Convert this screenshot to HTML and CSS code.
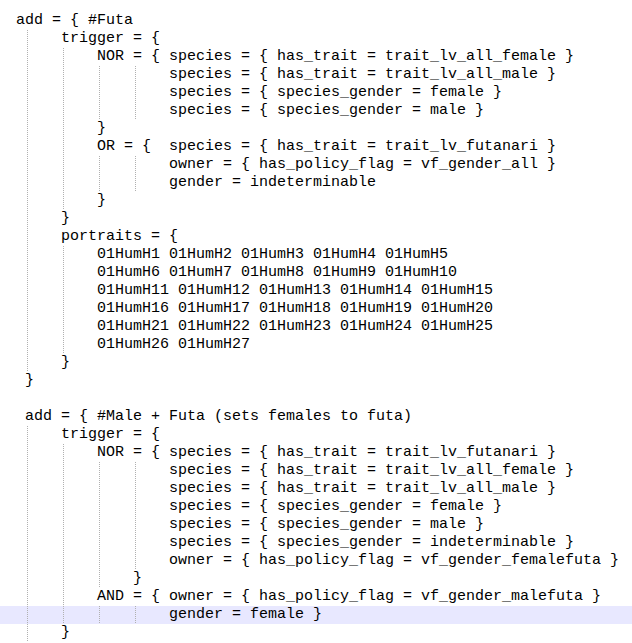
FILE: index.html
```html
<!DOCTYPE html>
<html>
<head>
<meta charset="utf-8">
<link rel="stylesheet" href="styles.css">
</head>
<body>
<div class="editor">
<div class="ln"> add = { #Futa</div>
<div class="ln">  <span class="g"></span>trigger = {</div>
<div class="ln">  <span class="g"></span><span class="g"></span>NOR = { species = { has_trait = trait_lv_all_female }</div>
<div class="ln">  <span class="g"></span><span class="g"></span><span class="g"></span><span class="g"></span>species = { has_trait = trait_lv_all_male }</div>
<div class="ln">  <span class="g"></span><span class="g"></span><span class="g"></span><span class="g"></span>species = { species_gender = female }</div>
<div class="ln">  <span class="g"></span><span class="g"></span><span class="g"></span><span class="g"></span>species = { species_gender = male }</div>
<div class="ln">  <span class="g"></span><span class="g"></span>}</div>
<div class="ln">  <span class="g"></span><span class="g"></span>OR = {  species = { has_trait = trait_lv_futanari }</div>
<div class="ln">  <span class="g"></span><span class="g"></span><span class="g"></span><span class="g"></span>owner = { has_policy_flag = vf_gender_all }</div>
<div class="ln">  <span class="g"></span><span class="g"></span><span class="g"></span><span class="g"></span>gender = indeterminable</div>
<div class="ln">  <span class="g"></span><span class="g"></span>}</div>
<div class="ln">  <span class="g"></span>}</div>
<div class="ln">  <span class="g"></span>portraits = {</div>
<div class="ln">  <span class="g"></span><span class="g"></span>01HumH1 01HumH2 01HumH3 01HumH4 01HumH5</div>
<div class="ln">  <span class="g"></span><span class="g"></span>01HumH6 01HumH7 01HumH8 01HumH9 01HumH10</div>
<div class="ln">  <span class="g"></span><span class="g"></span>01HumH11 01HumH12 01HumH13 01HumH14 01HumH15</div>
<div class="ln">  <span class="g"></span><span class="g"></span>01HumH16 01HumH17 01HumH18 01HumH19 01HumH20</div>
<div class="ln">  <span class="g"></span><span class="g"></span>01HumH21 01HumH22 01HumH23 01HumH24 01HumH25</div>
<div class="ln">  <span class="g"></span><span class="g"></span>01HumH26 01HumH27</div>
<div class="ln">  <span class="g"></span>}</div>
<div class="ln">  }</div>
<div class="ln"> </div>
<div class="ln">  add = { #Male + Futa (sets females to futa)</div>
<div class="ln">  <span class="g"></span>trigger = {</div>
<div class="ln">  <span class="g"></span><span class="g"></span>NOR = { species = { has_trait = trait_lv_futanari }</div>
<div class="ln">  <span class="g"></span><span class="g"></span><span class="g"></span><span class="g"></span>species = { has_trait = trait_lv_all_female }</div>
<div class="ln">  <span class="g"></span><span class="g"></span><span class="g"></span><span class="g"></span>species = { has_trait = trait_lv_all_male }</div>
<div class="ln">  <span class="g"></span><span class="g"></span><span class="g"></span><span class="g"></span>species = { species_gender = female }</div>
<div class="ln">  <span class="g"></span><span class="g"></span><span class="g"></span><span class="g"></span>species = { species_gender = male }</div>
<div class="ln">  <span class="g"></span><span class="g"></span><span class="g"></span><span class="g"></span>species = { species_gender = indeterminable }</div>
<div class="ln">  <span class="g"></span><span class="g"></span><span class="g"></span><span class="g"></span>owner = { has_policy_flag = vf_gender_femalefuta }</div>
<div class="ln">  <span class="g"></span><span class="g"></span><span class="g"></span>}</div>
<div class="ln">  <span class="g"></span><span class="g"></span>AND = { owner = { has_policy_flag = vf_gender_malefuta }</div>
<div class="ln current">  <span class="g"></span><span class="g"></span><span class="g"></span><span class="g"></span>gender = female }</div>
<div class="ln">  <span class="g"></span>}</div>
</div>
</body>
</html>
```
FILE: styles.css
```css
html, body {
  margin: 0;
  padding: 0;
  background: #ffffff;
}
.editor {
  padding-top: 12px;
  font-family: "Liberation Mono", "Courier New", monospace;
  font-size: 15px;
  line-height: 18px;
  color: #000000;
  overflow: hidden;
  height: 631px;
}
.ln {
  white-space: pre;
  height: 18px;
  padding-left: 7px;
}
.ln.current {
  background: #e8e8ff;
}
.g {
  display: inline-block;
  width: 36px;
  height: 18px;
  vertical-align: top;
  background-image: linear-gradient(#b0b0b0 50%, transparent 50%);
  background-size: 1px 2px;
  background-repeat: repeat-y;
  background-position: 2px 0;
}
```
